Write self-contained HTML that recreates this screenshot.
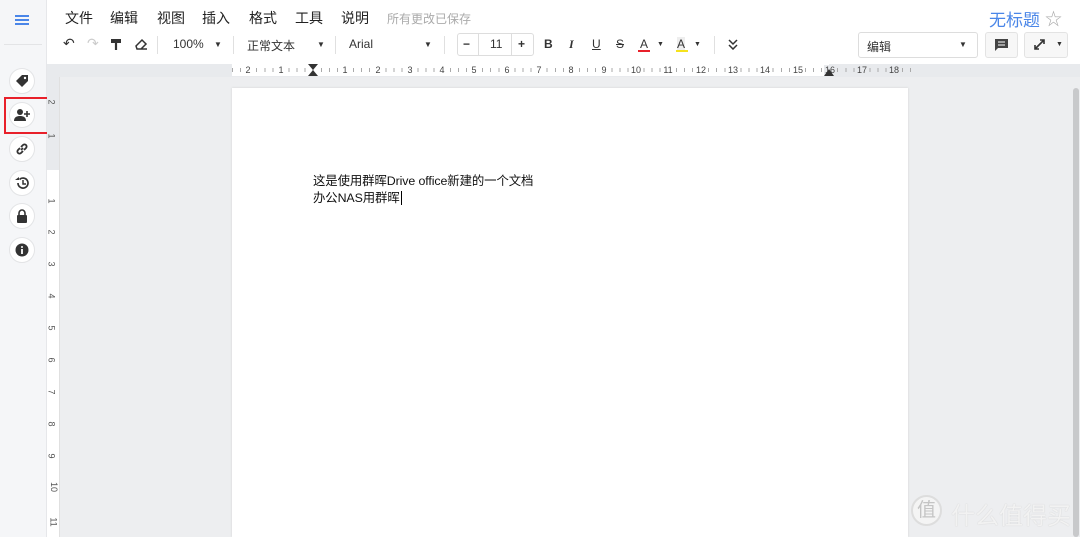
<!DOCTYPE html>
<html><head><meta charset="utf-8"><style>
*{margin:0;padding:0;box-sizing:border-box}
html,body{width:1080px;height:537px;overflow:hidden}
body{background:#edeef0;font-family:"Liberation Sans","Noto Sans CJK SC",sans-serif;position:relative}
.side{position:absolute;left:0;top:0;width:47px;height:537px;background:#f5f6f8;border-right:1px solid #e6e7ea}
.circ{position:absolute;left:9px;width:26px;height:26px;border-radius:50%;background:#fff;border:1px solid #e3e4e6;display:flex;align-items:center;justify-content:center}
.head{position:absolute;left:47px;top:0;width:1033px;height:64px;background:#fff}
.menu{position:absolute;top:8px;font-size:14px;color:#222}
.tb{position:absolute;top:37px;font-size:12px;color:#333}
.sep{position:absolute;top:36px;width:1px;height:18px;background:#e0e0e0}
.hr{position:absolute;left:47px;top:64px;width:1033px;height:13px;background:#e8eaed}
.hr .w{position:absolute;left:185px;top:0;width:597px;height:12px;background:#fff}
.ticks{position:absolute;left:185px;top:4px;width:680px;height:4px;background:repeating-linear-gradient(90deg,#aaa 0 1px,transparent 1px 8.07px)}
.n{position:absolute;top:1px;font-size:9px;color:#444;transform:translateX(-50%);background:inherit;padding:0 1px}
.vr{position:absolute;left:47px;top:77px;width:13px;height:460px;background:#fff;border-right:1px solid #e0e0e0}
.vn{position:absolute;left:2px;font-size:9px;color:#555;transform:rotate(90deg)}
.page{position:absolute;left:232px;top:88px;width:676px;height:449px;background:#fff;box-shadow:0 0 2px #d0d0d0}
.txt{position:absolute;left:313px;font-size:12.4px;color:#111;letter-spacing:-0.1px}
</style></head><body>
<div class="side">
 <div style="position:absolute;left:15px;top:15px;width:14px;height:2px;background:#4a86e8;box-shadow:0 4px 0 #4a86e8,0 8px 0 #4a86e8"></div>
 <div style="position:absolute;left:4px;top:44px;width:38px;height:1px;background:#e3e4e6"></div>
 <div class="circ" style="top:68px"><svg width="14" height="14" viewBox="0 0 14 14"><path d="M7 1h6v6l-6 6-6-6z" fill="#333"/><circle cx="10" cy="4" r="1.2" fill="#fff"/></svg></div>
 <div class="circ" style="top:102px"><svg width="16" height="14" viewBox="0 0 16 14"><circle cx="6" cy="4" r="3" fill="#333"/><path d="M0 13c0-4 3-5 6-5s6 1 6 5z" fill="#333"/><path d="M13 3v6M10 6h6" stroke="#333" stroke-width="1.6"/></svg></div>
 <div style="position:absolute;left:4px;top:97px;width:46px;height:37px;border:2px solid #e8202a"></div>
 <div class="circ" style="top:136px"><svg width="14" height="14" viewBox="0 0 14 14"><path d="M6 8l2-2M5 6L3 8a2 2 0 003 3l2-2M9 8l2-2a2 2 0 00-3-3L6 5" stroke="#333" stroke-width="1.8" fill="none"/></svg></div>
 <div class="circ" style="top:170px"><svg width="14" height="14" viewBox="0 0 14 14"><path d="M3 7a5 5 0 101.5-3.5" stroke="#333" stroke-width="1.7" fill="none"/><path d="M0 4h4v-3z" fill="#333"/><path d="M8 4v4h3" stroke="#333" stroke-width="1.5" fill="none"/></svg></div>
 <div class="circ" style="top:203px"><svg width="12" height="14" viewBox="0 0 12 14"><path d="M3 6V4a3 3 0 016 0v2" stroke="#333" stroke-width="1.6" fill="none"/><rect x="1" y="6" width="10" height="8" rx="1" fill="#333"/></svg></div>
 <div class="circ" style="top:237px"><svg width="14" height="14" viewBox="0 0 14 14"><circle cx="7" cy="7" r="6.5" fill="#333"/><rect x="6.1" y="6" width="1.8" height="5" fill="#fff"/><circle cx="7" cy="4" r="1" fill="#fff"/></svg></div>
</div>
<div class="head">
 <span class="menu" style="left:18px">文件</span><span class="menu" style="left:63px">编辑</span><span class="menu" style="left:110px">视图</span><span class="menu" style="left:155px">插入</span><span class="menu" style="left:202px">格式</span><span class="menu" style="left:248px">工具</span><span class="menu" style="left:294px">说明</span>
 <span class="menu" style="left:340px;font-size:12px;top:10px;color:#aaa">所有更改已保存</span>
 <span style="position:absolute;left:942px;top:6px;font-size:17px;color:#4a86e8">无标题</span>
 <span style="position:absolute;left:998px;top:5px;font-size:17px;color:#aaa">☆</span>
 <span class="tb" style="left:16px;font-size:14px;top:35px">↶</span><span class="tb" style="left:40px;color:#ccc;font-size:14px;top:35px">↷</span>
 <svg style="position:absolute;left:63px;top:38px" width="13" height="13"><path d="M1 1h10v4H1z" fill="#333"/><path d="M6 5v7" stroke="#333" stroke-width="2.2"/></svg>
 <svg style="position:absolute;left:88px;top:38px" width="13" height="12"><path d="M1 8l6-6 4 4-5 5H2zM3 11h9" stroke="#333" stroke-width="1.5" fill="none"/></svg>
 <div class="sep" style="left:110px"></div>
 <span class="tb" style="left:126px">100%</span><span class="tb" style="left:167px;font-size:8px;top:40px">▼</span>
 <div class="sep" style="left:186px"></div>
 <span class="tb" style="left:200px">正常文本</span><span class="tb" style="left:270px;font-size:8px;top:40px">▼</span>
 <div class="sep" style="left:288px"></div>
 <span class="tb" style="left:302px">Arial</span><span class="tb" style="left:377px;font-size:8px;top:40px">▼</span>
 <div class="sep" style="left:397px"></div>
 <div style="position:absolute;left:410px;top:33px;width:77px;height:23px;border:1px solid #ddd;border-radius:3px"></div>
 <div style="position:absolute;left:431px;top:33px;width:1px;height:23px;background:#ddd"></div>
 <div style="position:absolute;left:464px;top:33px;width:1px;height:23px;background:#ddd"></div>
 <span class="tb" style="left:416px;font-weight:bold">−</span><span class="tb" style="left:443px">11</span><span class="tb" style="left:471px;font-weight:bold">+</span>
 <span class="tb" style="left:497px;font-weight:bold">B</span><span class="tb" style="left:522px;font-style:italic;font-family:'Liberation Serif';font-weight:bold">I</span>
 <span class="tb" style="left:545px;text-decoration:underline">U</span><span class="tb" style="left:569px;text-decoration:line-through">S</span>
 <span class="tb" style="left:593px">A</span><div style="position:absolute;left:591px;top:50px;width:12px;height:2px;background:#e8202a"></div><span class="tb" style="left:610px;font-size:7px;top:41px">▼</span>
 <span class="tb" style="left:630px;background:#eee">A</span><div style="position:absolute;left:629px;top:50px;width:12px;height:2px;background:#f5e21e"></div><span class="tb" style="left:647px;font-size:7px;top:41px">▼</span>
 <div class="sep" style="left:667px"></div>
 <svg style="position:absolute;left:680px;top:39px" width="12" height="11"><path d="M2 1l4 4 4-4M2 6l4 4 4-4" stroke="#333" stroke-width="1.5" fill="none"/></svg>
 <div style="position:absolute;left:811px;top:32px;width:120px;height:26px;border:1px solid #ddd;border-radius:3px"></div>
 <span class="tb" style="left:820px;top:38px">编辑</span><span class="tb" style="left:912px;font-size:8px;top:40px">▼</span>
 <div style="position:absolute;left:938px;top:32px;width:33px;height:26px;border:1px solid #e3e3e3;border-radius:3px;background:#f7f7f7"></div>
 <svg style="position:absolute;left:948px;top:39px" width="13" height="12"><path d="M0 0h13v9H3l-3 3z" fill="#444"/><path d="M3 3h7M3 6h7" stroke="#fff"/></svg>
 <div style="position:absolute;left:977px;top:32px;width:44px;height:26px;border:1px solid #e3e3e3;border-radius:3px;background:#f7f7f7"></div>
 <svg style="position:absolute;left:986px;top:38px" width="13" height="13"><path d="M2 11l9-9M7 2h4v4M2 7v4h4" stroke="#333" stroke-width="1.6" fill="none"/></svg>
 <span class="tb" style="left:1009px;font-size:7px;top:41px">▼</span>
</div>
<div class="hr"><div class="w"></div><div class="ticks"></div>
 <span class="n" style="left:201px;background:#fff">2</span><span class="n" style="left:234px;background:#fff">1</span>
 <span class="n" style="left:298px;background:#fff">1</span><span class="n" style="left:331px;background:#fff">2</span><span class="n" style="left:363px;background:#fff">3</span><span class="n" style="left:395px;background:#fff">4</span><span class="n" style="left:427px;background:#fff">5</span><span class="n" style="left:460px;background:#fff">6</span><span class="n" style="left:492px;background:#fff">7</span><span class="n" style="left:524px;background:#fff">8</span><span class="n" style="left:557px;background:#fff">9</span><span class="n" style="left:589px;background:#fff">10</span><span class="n" style="left:621px;background:#fff">11</span><span class="n" style="left:654px;background:#fff">12</span><span class="n" style="left:686px;background:#fff">13</span><span class="n" style="left:718px;background:#fff">14</span><span class="n" style="left:751px;background:#fff">15</span><span class="n" style="left:783px;background:#e8eaed">16</span><span class="n" style="left:815px;background:#e8eaed">17</span><span class="n" style="left:847px;background:#e8eaed">18</span>
 <div style="position:absolute;left:261px;top:0;width:0;border-left:5px solid transparent;border-right:5px solid transparent;border-top:6px solid #333"></div>
 <div style="position:absolute;left:261px;top:6px;width:0;border-left:5px solid transparent;border-right:5px solid transparent;border-bottom:6px solid #333"></div>
 <div style="position:absolute;left:777px;top:5px;width:0;border-left:5px solid transparent;border-right:5px solid transparent;border-bottom:7px solid #333"></div>
</div>
<div class="vr"><div style="position:absolute;left:0;top:0;width:12px;height:93px;background:#e8eaed"></div>
 <span class="vn" style="top:20px">2</span><span class="vn" style="top:54px">1</span><span class="vn" style="top:119px">1</span><span class="vn" style="top:150px">2</span><span class="vn" style="top:182px">3</span><span class="vn" style="top:214px">4</span><span class="vn" style="top:246px">5</span><span class="vn" style="top:278px">6</span><span class="vn" style="top:310px">7</span><span class="vn" style="top:342px">8</span><span class="vn" style="top:374px">9</span><span class="vn" style="top:405px">10</span><span class="vn" style="top:440px">11</span>
</div>
<div class="page"></div>
<div class="txt" style="top:171px">这是使用群晖Drive office新建的一个文档</div>
<div class="txt" style="top:188px">办公NAS用群晖<span style="border-left:1.5px solid #000;margin-left:1px"></span></div>
<div style="position:absolute;left:1073px;top:88px;width:6px;height:449px;background:#c8c9cb;border-radius:3px"></div>
<div style="position:absolute;left:911px;top:495px;width:31px;height:31px;border-radius:50%;background:#f4f4f4;border:2px solid #ddd;color:#c4c4c4;font-size:19px;text-align:center;line-height:27px">值</div>
<div style="position:absolute;left:951px;top:496px;font-size:24px;color:#f2f2f2;text-shadow:0 0 1px #c4c4c4">什么值得买</div>
</body></html>
